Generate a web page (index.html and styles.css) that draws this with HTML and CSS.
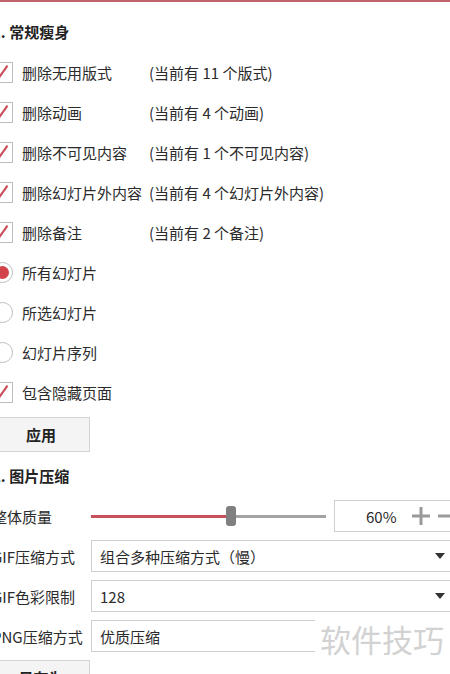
FILE: index.html
```html
<!DOCTYPE html>
<html lang="zh-CN">
  <head>
    <meta charset="UTF-8" />
    <meta name="viewport" content="width=device-width, initial-scale=1.0" />
    <title>文件瘦身</title>
    <link rel="stylesheet" href="styles.css">
  </head>
  <body>
    <div class="panel">
      <h2 class="section-title">1. 常规瘦身</h2>

      <div class="opt-row">
        <span class="check on"><svg viewBox="0 0 21 21"><path d="M1 11 L6 17 L16 3"/></svg></span>
        <span class="opt-label">删除无用版式</span>
        <span class="opt-info">(当前有 11 个版式)</span>
      </div>
      <div class="opt-row">
        <span class="check on"><svg viewBox="0 0 21 21"><path d="M1 11 L6 17 L16 3"/></svg></span>
        <span class="opt-label">删除动画</span>
        <span class="opt-info">(当前有 4 个动画)</span>
      </div>
      <div class="opt-row">
        <span class="check on"><svg viewBox="0 0 21 21"><path d="M1 11 L6 17 L16 3"/></svg></span>
        <span class="opt-label">删除不可见内容</span>
        <span class="opt-info">(当前有 1 个不可见内容)</span>
      </div>
      <div class="opt-row">
        <span class="check on"><svg viewBox="0 0 21 21"><path d="M1 11 L6 17 L16 3"/></svg></span>
        <span class="opt-label">删除幻灯片外内容</span>
        <span class="opt-info">(当前有 4 个幻灯片外内容)</span>
      </div>
      <div class="opt-row">
        <span class="check on"><svg viewBox="0 0 21 21"><path d="M1 11 L6 17 L16 3"/></svg></span>
        <span class="opt-label">删除备注</span>
        <span class="opt-info">(当前有 2 个备注)</span>
      </div>

      <div class="opt-row">
        <span class="radio on"></span>
        <span class="opt-label">所有幻灯片</span>
      </div>
      <div class="opt-row">
        <span class="radio"></span>
        <span class="opt-label">所选幻灯片</span>
      </div>
      <div class="opt-row">
        <span class="radio"></span>
        <span class="opt-label">幻灯片序列</span>
      </div>
      <div class="opt-row">
        <span class="check on"><svg viewBox="0 0 21 21"><path d="M1 11 L6 17 L16 3"/></svg></span>
        <span class="opt-label">包含隐藏页面</span>
      </div>

      <button class="btn">应用</button>

      <h2 class="section-title second">2. 图片压缩</h2>

      <div class="field-row">
        <span class="field-label">整体质量</span>
        <div class="quality">
          <div class="slider">
            <span class="track-fill"></span>
            <span class="thumb"></span>
            <span class="track-rest"></span>
          </div>
          <div class="num-box">
            <span class="num-val">60%</span>
            <svg class="num-btn" viewBox="0 0 18 18"><path d="M0 9 H18 M9 0 V18"/></svg>
            <svg class="num-btn" viewBox="0 0 18 18"><path d="M0 9 H18"/></svg>
          </div>
        </div>
      </div>

      <div class="field-row">
        <span class="field-label">GIF压缩方式</span>
        <div class="select">
          <span>组合多种压缩方式（慢）</span>
          <span class="arrow"></span>
        </div>
      </div>
      <div class="field-row">
        <span class="field-label">GIF色彩限制</span>
        <div class="select">
          <span>128</span>
          <span class="arrow"></span>
        </div>
      </div>
      <div class="field-row">
        <span class="field-label">PNG压缩方式</span>
        <div class="select">
          <span>优质压缩</span>
          <span class="arrow"></span>
        </div>
      </div>

      <button class="btn">另存为</button>
    </div>

    <div class="watermark">软件技巧</div>
  </body>
</html>
```

FILE: styles.css
```css
:root {
  --text: #2b2b2b;
  --red: #c8505a;
  --line: #cfcfcf;
  --gray: #9a9a9a;
}
html,
body {
  margin: 0;
  height: 100%;
  overflow: hidden;
}
body {
  position: relative;
  font-family: "Noto Sans CJK SC", "Noto Sans", sans-serif;
  font-size: 15px;
  color: var(--text);
  background: #ffffff;
  border-top: 2px solid #c0646b;
  box-sizing: border-box;
}
.panel {
  width: 470px;
  margin-left: -8px;
  padding-top: 10px;
}
.section-title {
  margin: 0;
  height: 40px;
  line-height: 40px;
  font-size: 15px;
  font-weight: bold;
  color: #222222;
}
.section-title.second {
  margin-top: 4px;
}
.opt-row {
  display: flex;
  align-items: center;
  height: 40px;
}
.check,
.radio {
  flex: none;
  width: 21px;
  height: 21px;
  box-sizing: border-box;
  border: 1px solid #bdbdbd;
  background: #ffffff;
}
.check svg {
  display: block;
  width: 19px;
  height: 19px;
}
.check path {
  fill: none;
  stroke: var(--red);
  stroke-width: 2.4;
}
.radio {
  border-radius: 50%;
  display: flex;
  align-items: center;
  justify-content: center;
}
.radio.on::after {
  content: "";
  width: 13px;
  height: 13px;
  border-radius: 50%;
  background: #d2434b;
}
.opt-label {
  width: 127px;
  margin-left: 9px;
  white-space: nowrap;
}
.opt-info {
  white-space: nowrap;
}
.btn {
  display: block;
  width: 98px;
  height: 35px;
  margin-top: 5px;
  background: #f4f4f4;
  border: 1px solid #d4d4d4;
  font-family: inherit;
  font-size: 15px;
  font-weight: bold;
  color: #222222;
  padding: 0;
}
.field-row {
  display: flex;
  align-items: center;
  height: 40px;
}
.field-row + .btn {
  margin-top: 4px;
}
.field-label {
  width: 99px;
  flex: none;
  white-space: nowrap;
}
.quality {
  display: flex;
  align-items: center;
  gap: 8px;
}
.slider {
  display: flex;
  align-items: center;
  width: 235px;
  height: 20px;
}
.track-fill {
  width: 135px;
  height: 3px;
  background: var(--red);
}
.thumb {
  width: 10px;
  height: 20px;
  border-radius: 3px;
  background: #808080;
}
.track-rest {
  width: 90px;
  height: 3px;
  background: #a4a4a4;
}
.num-box {
  display: flex;
  align-items: center;
  width: 140px;
  height: 32px;
  box-sizing: border-box;
  border: 1px solid var(--line);
  padding-left: 31px;
}
.num-val {
  width: 38px;
}
.num-btn {
  width: 18px;
  height: 18px;
  margin-left: 8px;
}
.num-btn path {
  stroke: var(--gray);
  stroke-width: 3;
  fill: none;
}
.select {
  display: flex;
  align-items: center;
  justify-content: space-between;
  width: 369px;
  height: 32px;
  box-sizing: border-box;
  border: 1px solid var(--line);
  padding: 0 14px 0 8px;
}
.arrow {
  width: 0;
  height: 0;
  border-left: 5px solid transparent;
  border-right: 5px solid transparent;
  border-top: 6px solid #333333;
}
.watermark {
  position: absolute;
  left: 315px;
  top: 610px;
  width: 135px;
  height: 64px;
  background: #ffffff;
  color: #d2d2d2;
  font-size: 31px;
  line-height: 54px;
  padding-left: 5px;
  box-sizing: border-box;
  white-space: nowrap;
}
```
